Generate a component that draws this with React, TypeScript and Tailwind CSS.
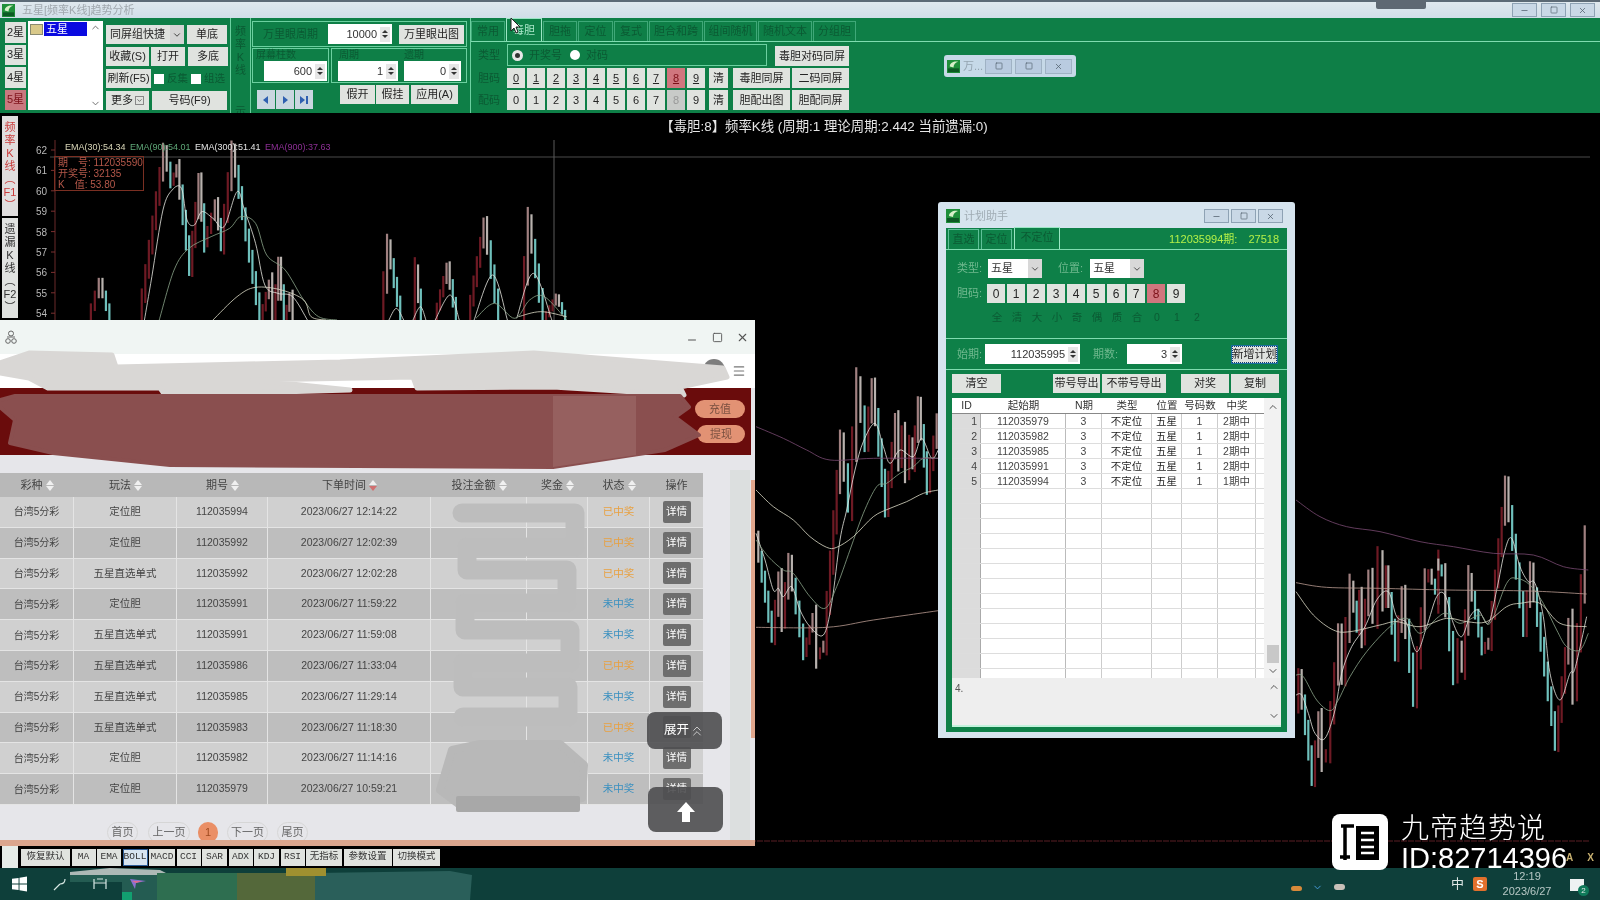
import { ChevronDown, ChevronUp, ChevronsUp, Menu, Minus, Square, X } from "lucide-react";
import { ReactNode } from "react";

type P = [number, number];

// points below were read off 3x crops, crop() puts them back on the page
const crop = (ox: number, oy: number, sx: number, sy: number, pts: P[]): P[] =>
  pts.map(([x, y]) => [ox + x / sx, oy + y / sy]);

const a = (pts: P[]) => crop(0, 130, 2.7, 3, pts);
const b = (pts: P[]) => crop(740, 370, 3, 3, pts);
const c = (pts: P[]) => crop(1280, 460, 3, 3, pts);

const zigzags: P[][] = [
  a([[240, 570], [272, 455], [300, 570]]),
  a([[378, 570], [445, 60], [465, 160], [480, 110], [515, 415], [540, 155], [555, 340], [585, 220], [600, 345], [630, 60], [705, 570], [730, 460], [740, 570], [755, 405], [770, 570], [785, 500], [795, 570]]),
  a([[1030, 570], [1050, 345], [1085, 570]]),
  a([[1115, 570], [1125, 425], [1140, 570]]),
  a([[1175, 570], [1210, 410], [1235, 570]]),
  a([[1265, 570], [1310, 280], [1350, 570]]),
  a([[1410, 570], [1430, 275], [1470, 570], [1505, 500], [1530, 570]]),
  b([[50, 500], [100, 800], [120, 630], [130, 750], [150, 575], [195, 850], [222, 740], [235, 860], [255, 820], [305, 215], [330, 400], [355, 45], [380, 220], [400, 50], [440, 415], [470, 155], [480, 270], [490, 190], [500, 305], [515, 220], [520, 280], [538, 105], [565, 350], [595, 150]]),
  c([[50, 735], [60, 650], [100, 955], [120, 780], [130, 900], [145, 875], [180, 525], [190, 640], [215, 380], [235, 500], [240, 415], [250, 530], [270, 355], [285, 460], [300, 305], [315, 420], [320, 340], [350, 580], [370, 405], [405, 710], [440, 360], [450, 335], [480, 425], [470, 305], [490, 340], [525, 645], [540, 560], [550, 620], [570, 355], [610, 570], [630, 545], [680, 75], [735, 505], [755, 330], [830, 850], [870, 500], [885, 680], [920, 240]]),
];

const lines: { color: string; pts: P[] }[] = [
  { color: "#e8e8e2", pts: a([[390, 570], [410, 440], [440, 240], [465, 180], [490, 175], [505, 270], [525, 285], [545, 245], [575, 265], [605, 290], [640, 185], [660, 240], [690, 340], [715, 465], [750, 490], [790, 500], [830, 570]]) },
  { color: "#e8e8e2", pts: a([[1050, 570], [1070, 535], [1090, 570]]) },
  { color: "#e8e8e2", pts: a([[1115, 570], [1135, 530], [1150, 570]]) },
  { color: "#e8e8e2", pts: a([[1175, 570], [1215, 495], [1240, 570]]) },
  { color: "#e8e8e2", pts: a([[1280, 570], [1330, 435], [1370, 570]]) },
  { color: "#e8e8e2", pts: a([[1395, 565], [1440, 430], [1490, 570]]) },
  { color: "#8ca58a", pts: a([[430, 570], [470, 420], [510, 355], [570, 320], [620, 295], [650, 260], [690, 280], [720, 375], [770, 420], [820, 510], [860, 560], [910, 570]]) },
  { color: "#8ca58a", pts: a([[1285, 565], [1335, 520], [1390, 565], [1430, 510], [1470, 500], [1530, 570]]) },
  { color: "#dcdac6", pts: a([[575, 570], [640, 500], [690, 472], [760, 480], [820, 510], [840, 560], [880, 570]]) },
  { color: "#dcdac6", pts: a([[1400, 560], [1460, 545], [1530, 560]]) },

  { color: "#e8e8e2", pts: b([[48, 490], [75, 570], [100, 660], [115, 655], [130, 680], [155, 650], [180, 720], [210, 770], [250, 795], [275, 700], [300, 510], [320, 420], [345, 300], [370, 215], [405, 160], [430, 230], [450, 280], [480, 240], [520, 260], [545, 205], [575, 265], [595, 240]]) },
  { color: "#8ca58a", pts: b([[48, 510], [85, 560], [130, 600], [160, 610], [210, 680], [255, 715], [290, 650], [330, 540], [370, 430], [410, 350], [440, 340], [480, 310], [520, 290], [550, 265], [595, 265]]) },
  { color: "#dcdac6", pts: b([[48, 360], [100, 410], [160, 450], [210, 500], [260, 532], [290, 532], [340, 500], [400, 440], [450, 415], [500, 395], [550, 370], [595, 360]]) },
  { color: "#7a4a72", pts: b([[48, 170], [130, 205], [200, 240], [270, 270], [400, 265], [595, 265]]) },
  { color: "#b99a90", pts: b([[48, 772], [260, 772], [400, 750], [595, 722]]) },

  { color: "#e8e8e2", pts: c([[48, 705], [65, 705], [85, 760], [105, 820], [135, 835], [165, 750], [185, 640], [215, 560], [255, 500], [290, 420], [325, 395], [350, 470], [380, 490], [410, 575], [440, 500], [470, 410], [495, 405], [520, 490], [545, 530], [570, 470], [595, 450], [625, 490], [650, 390], [675, 270], [695, 235], [720, 320], [745, 365], [765, 370], [790, 470], [810, 640], [840, 720], [870, 640], [885, 625], [920, 470]]) },
  { color: "#8ca58a", pts: c([[48, 645], [70, 650], [110, 720], [150, 752], [175, 720], [210, 650], [260, 575], [330, 500], [380, 475], [420, 520], [470, 475], [500, 460], [540, 490], [600, 465], [630, 490], [680, 370], [710, 355], [750, 375], [790, 430], [830, 510], [860, 560], [900, 570], [925, 520]]) },
  { color: "#dcdac6", pts: c([[48, 395], [100, 465], [160, 510], [210, 515], [300, 495], [350, 485], [420, 500], [500, 475], [560, 485], [620, 485], [680, 440], [720, 430], [780, 430], [840, 490], [920, 500]]) },
  { color: "#7a4a72", pts: c([[48, 120], [120, 170], [200, 200], [300, 215], [420, 245], [520, 260], [640, 280], [760, 285], [850, 320], [925, 330]]) },
  { color: "#b99a90", pts: c([[48, 368], [140, 382], [300, 385], [500, 390], [700, 392], [800, 395], [920, 402]]) },
];

function smooth(pts: P[]) {
  let d = `M${pts[0][0]} ${pts[0][1]}`;
  for (let i = 0; i < pts.length - 1; i++) {
    const p0 = pts[i - 1] ?? pts[i];
    const p1 = pts[i];
    const p2 = pts[i + 1];
    const p3 = pts[i + 2] ?? p2;
    d += ` C${p1[0] + (p2[0] - p0[0]) / 6} ${p1[1] + (p2[1] - p0[1]) / 6} ${p2[0] - (p3[0] - p1[0]) / 6} ${p2[1] - (p3[1] - p1[1]) / 6} ${p2[0]} ${p2[1]}`;
  }
  return d;
}

function candles(path: P[]) {
  const out: { x: number; y: number; h: number; fill: string }[] = [];
  for (let s = 0; s < path.length - 1; s++) {
    const [ax, ay] = path[s];
    const [bx, by] = path[s + 1];
    const n = Math.max(1, Math.round(Math.abs(bx - ax) / 3.6));
    const step = (by - ay) / n;
    const h = Math.max(Math.abs(step) * 1.6, 12);
    for (let i = 0; i < n; i++) {
      const mid = ay + step * (i + 0.5);
      const up = by < ay;
      const fill = up ? (i === n - 1 && n > 1 ? "#a08080" : "#6e1a24") : i === 0 ? "#b8b2ae" : "#6fc0bc";
      out.push({ x: ax + ((bx - ax) * (i + 0.5)) / n, y: mid - h / 2, h, fill });
    }
  }
  return out;
}

function Chart() {
  const ticks = [62, 61, 60, 59, 58, 57, 56, 55, 54];
  return (
    <svg viewBox="0 113 1600 733" className="absolute inset-0 w-full h-full">
      <line x1="50" y1="157" x2="1590" y2="157" stroke="#4a4a4a" />
      <line x1="554" y1="140" x2="554" y2="325" stroke="#5a5a5a" />
      <line x1="55" y1="140" x2="55" y2="325" stroke="#6b2a2a" />
      <line x1="750" y1="841" x2="1590" y2="841" stroke="#5a1f25" strokeDasharray="6 1" />
      {ticks.map((t, i) => (
        <g key={t}>
          <line x1="51" y1={150 + i * 20.4} x2="55" y2={150 + i * 20.4} stroke="#7a3030" />
          <text x="47" y={154 + i * 20.4} textAnchor="end" fontSize="10" fill="#b8b8b8">
            {t}
          </text>
        </g>
      ))}
      {zigzags.flatMap((z, i) =>
        candles(z).map((k, j) => (
          <rect key={`${i}-${j}`} x={k.x - 1.1} y={k.y} width="2.2" height={k.h} fill={k.fill} />
        ))
      )}
      {lines.map((l, i) => (
        <path key={i} d={smooth(l.pts)} fill="none" stroke={l.color} strokeWidth="0.8" />
      ))}
      <text x="65" y="150" fontSize="9" fill="#d9d6b8">EMA(30):54.34</text>
      <text x="130" y="150" fontSize="9" fill="#5fa878">EMA(90):54.01</text>
      <text x="195" y="150" fontSize="9" fill="#e4e4e4">EMA(300):51.41</text>
      <text x="265" y="150" fontSize="9" fill="#8c2f94">EMA(900):37.63</text>
    </svg>
  );
}

function Btn({ className = "", children }: { className?: string; children: ReactNode }) {
  return (
    <div className={`flex items-center justify-center bg-[#e0e3df] text-[#252525] text-[11px] leading-none whitespace-nowrap shrink-0 ${className}`}>
      {children}
    </div>
  );
}

function Spin() {
  return (
    <div className="w-[10px] h-[15px] flex flex-col items-center justify-center gap-[2px] bg-[#e6e6e6] shrink-0">
      <span className="w-0 h-0 border-x-[3px] border-x-transparent border-b-[3px] border-b-[#333]" />
      <span className="w-0 h-0 border-x-[3px] border-x-transparent border-t-[3px] border-t-[#333]" />
    </div>
  );
}

function NumInput({ value, className = "" }: { value: string; className?: string }) {
  return (
    <div className={`flex items-center justify-end gap-[3px] pr-[2px] bg-white text-[11px] text-[#333] shrink-0 ${className}`}>
      {value}
      <Spin />
    </div>
  );
}

function VText({ chars, className = "" }: { chars: string[]; className?: string }) {
  return (
    <div className={`flex flex-col items-center justify-center leading-[13px] text-[11px] ${className}`}>
      {chars.map((ch, i) => (
        <span key={i}>{ch}</span>
      ))}
    </div>
  );
}

function AppIcon({ className = "" }: { className?: string }) {
  return (
    <svg viewBox="0 0 14 14" className={className}>
      <rect width="14" height="14" fill="#1f8f3a" />
      <path d="M3 7 C3 3 8 1 12 2 C9 3 7 5 7 8 Z" fill="#d8f0c8" />
      <rect x="1" y="9" width="12" height="4" fill="#0c5a24" />
    </svg>
  );
}

function WinBtn({ children }: { children: ReactNode }) {
  return (
    <div className="w-[25px] h-[14px] flex items-center justify-center border border-[#8ea2b4] bg-[#c9d8e6] text-[#52606e]">
      {children}
    </div>
  );
}

function Title() {
  return (
    <div className="relative h-[18px] shrink-0 flex items-center border-t-2 border-[#5c6a76] bg-gradient-to-b from-[#dfe8ee] to-[#d0dee8]">
      <AppIcon className="ml-[2px] w-[13px] h-[13px]" />
      <span className="ml-[7px] text-[11px] text-[#a0a8ae]">五星[频率K线]趋势分析</span>
      <div className="absolute left-[1376px] top-[-2px] w-[50px] h-[9px] bg-[#5e6873] rounded-b-[2px]" />
      <div className="ml-auto mr-[5px] flex gap-[4px]">
        <WinBtn><Minus size={9} /></WinBtn>
        <WinBtn><Square size={8} /></WinBtn>
        <WinBtn><X size={9} /></WinBtn>
      </div>
    </div>
  );
}

function Check({ label }: { label: string }) {
  return (
    <div className="flex items-center gap-[3px] text-[10.5px] text-[#0b5a33] ml-[3px] whitespace-nowrap shrink-0">
      <span className="w-[10px] h-[10px] bg-white" />
      {label}
    </div>
  );
}

function Arrow({ d }: { d: string }) {
  return (
    <Btn className="w-[18px] h-[19px] bg-[#c9d6e0]!">
      <svg viewBox="0 0 10 10" className="w-[10px] h-[10px]">
        <path d={d} fill="#2f5fb0" />
      </svg>
    </Btn>
  );
}

const tabs: [string, string][] = [
  ["常用", "w-[34px]"],
  ["毒胆", "w-[36px]"],
  ["胆拖", "w-[34px]"],
  ["定位", "w-[35px]"],
  ["复式", "w-[34px]"],
  ["胆合和跨", "w-[54px]"],
  ["组间随机", "w-[53px]"],
  ["随机文本", "w-[54px]"],
  ["分组胆", "w-[43px]"],
];
const digits = ["0", "1", "2", "3", "4", "5", "6", "7", "8", "9"];

function Toolbar() {
  return (
    <div className="h-[95px] shrink-0 flex bg-[#0e7f47]">
      <div className="w-[21px] ml-[5px] mt-[4px] flex flex-col gap-[2px] shrink-0">
        {["2星", "3星", "4星"].map((s) => (
          <Btn key={s} className="h-[20.5px]">{s}</Btn>
        ))}
        <Btn className="h-[20.5px] bg-[#c9797f]! text-[#7c1018]!">5星</Btn>
      </div>
      <div className="w-[75px] h-[89px] ml-[2px] mt-[3px] bg-white flex shrink-0">
        <div className="w-[59px] flex items-start pl-[2px] pt-[1px]">
          <span className="w-[13px] h-[11px] mt-[2px] mr-[1px] bg-[#d9c98a] border border-[#8a8a70]" />
          <span className="w-[43px] h-[14px] pl-[2px] bg-[#0a0ae0] text-white text-[11px] leading-[14px]">五星</span>
        </div>
        <div className="flex-1 flex flex-col items-center justify-between py-[1px] text-[#666]">
          <ChevronUp size={11} />
          <ChevronDown size={11} />
        </div>
      </div>

      <div className="w-[121px] ml-[3px] mt-[7px] flex flex-col gap-[3px] shrink-0">
        <div className="flex h-[19px] gap-[3px]">
          <Btn className="w-[78px] justify-start pl-[4px] relative overflow-hidden">
            同屏组快捷
            <span className="absolute right-0 top-0 h-full w-[14px] flex items-center justify-center bg-[#d4d4d4]"><ChevronDown size={10} /></span>
          </Btn>
          <Btn className="w-[40px]">单底</Btn>
        </div>
        <div className="flex h-[19px]">
          <Btn className="w-[43px]">收藏(S)</Btn>
          <Btn className="w-[34px] ml-[2px]">打开</Btn>
          <Btn className="w-[40px] ml-[3px]">多底</Btn>
        </div>
        <div className="flex h-[19px] items-center">
          <Btn className="w-[45px] h-full">刷新(F5)</Btn>
          <Check label="反集" />
          <Check label="组选" />
        </div>
        <div className="flex h-[19px]">
          <Btn className="w-[43px] gap-[2px]">更多<ChevronDown size={9} className="border border-[#888]" /></Btn>
          <Btn className="w-[75px] ml-[3px]">号码(F9)</Btn>
        </div>
      </div>

      <div className="w-[1px] ml-[3px] bg-[#6cd0a0] shrink-0" />
      <div className="w-[19px] flex flex-col items-center text-[#0b5a33] shrink-0">
        <VText chars={["频", "率", "K", "线"]} className="mt-[7px]" />
        <VText chars={["示"]} className="mt-[28px]" />
      </div>
      <div className="w-[1px] bg-[#6cd0a0] shrink-0" />

      <div className="w-[219px] flex flex-col shrink-0 pl-[1px]">
        <div className="w-[215px] h-[26px] mt-[3px] flex items-center border border-[#6cd0a0]">
          <span className="w-[75px] text-center text-[11px] text-[#0b5a33]">万里眼周期</span>
          <NumInput value="10000" className="w-[64px] h-[20px]" />
          <Btn className="w-[65px] h-[19px] ml-[7px]">万里眼出图</Btn>
        </div>
        <div className="flex h-[35px] mt-[1px]">
          <div className="w-[77px] border border-[#6cd0a0] text-[10px] leading-[12px] text-[#0b5a33] pl-[3px]">
            屏幕柱数
            <NumInput value="600" className="w-[63px] h-[20px] ml-[8px]" />
          </div>
          <div className="w-[136px] ml-[2px] border border-[#6cd0a0] flex text-[10px] leading-[12px] text-[#0b5a33]">
            <div className="w-[66px] pl-[6px]">
              <div className="pl-[1px]">周期</div>
              <NumInput value="1" className="w-[60px] h-[20px]" />
            </div>
            <div className="pl-[6px]">
              <div>遗期</div>
              <NumInput value="0" className="w-[57px] h-[20px]" />
            </div>
          </div>
        </div>
        <div className="flex mt-[2px] pl-[5px] items-start">
          <div className="flex gap-[1px] mt-[5px]">
            <Arrow d="M7 1 L2 5 L7 9 Z" />
            <Arrow d="M3 1 L8 5 L3 9 Z" />
            <Arrow d="M1 1 L6 5 L1 9 Z M7 1 H9 V9 H7 Z" />
          </div>
          <Btn className="w-[35px] h-[19px] ml-[27px]">假开</Btn>
          <Btn className="w-[33px] h-[19px] ml-[1px]">假挂</Btn>
          <Btn className="w-[47px] h-[19px] ml-[2px]">应用(A)</Btn>
        </div>
      </div>

      <div className="w-[1px] bg-[#6cd0a0] shrink-0" />

      <div className="flex-1 flex flex-col">
        <div className="h-[24px] flex items-end gap-[1px] border-b border-[#7fdcb0]">
          {tabs.map(([t, w], i) => (
            <div
              key={t}
              className={`${w} flex items-center justify-center text-[11px] border-t border-x ${i === 1 ? "h-[23px] border-[#9ce6c4] text-[#a8e6c8]" : "h-[20px] border-[#3fa878] text-[#0b5a33]"}`}
            >
              {t}
            </div>
          ))}
        </div>
        <div className="flex h-[22px] mt-[2px]">
          <span className="w-[36px] flex items-center justify-center text-[11px] text-[#0b5a33]">类型</span>
          <div className="w-[260px] flex items-center border border-[#6cd0a0] pl-[4px] text-[11px] text-[#0b5a33]">
            <span className="w-[11px] h-[11px] rounded-full bg-[#333] border-[3px] border-[#e8e8e8]" />
            <span className="ml-[6px]">开奖号</span>
            <span className="w-[10px] h-[10px] ml-[8px] rounded-full bg-white" />
            <span className="ml-[6px]">对码</span>
          </div>
          <Btn className="w-[74px] h-[20px] mt-[2px] ml-[8px]">毒胆对码同屏</Btn>
        </div>
        <div className="flex h-[20px] mt-[2px]">
          <span className="w-[36px] flex items-center justify-center text-[11px] text-[#0b5a33]">胆码</span>
          <div className="flex gap-[2px]">
            {digits.map((d) => (
              <Btn key={d} className={`w-[18px] underline ${d === "8" ? "bg-[#d0767e]! text-[#7c1018]!" : ""}`}>{d}</Btn>
            ))}
          </div>
          <Btn className="w-[19px] ml-[4px]">清</Btn>
          <Btn className="w-[57px] ml-[5px]">毒胆同屏</Btn>
          <Btn className="w-[57px] ml-[2px]">二码同屏</Btn>
        </div>
        <div className="flex h-[20px] mt-[2px]">
          <span className="w-[36px] flex items-center justify-center text-[11px] text-[#0b5a33]">配码</span>
          <div className="flex gap-[2px]">
            {digits.map((d) => (
              <Btn key={d} className={`w-[18px] ${d === "8" ? "bg-[#c8cac8]! text-[#999]!" : ""}`}>{d}</Btn>
            ))}
          </div>
          <Btn className="w-[19px] ml-[4px]">清</Btn>
          <Btn className="w-[57px] ml-[5px]">胆配出图</Btn>
          <Btn className="w-[57px] ml-[2px]">胆配同屏</Btn>
        </div>
      </div>
    </div>
  );
}

function Tooltip() {
  return (
    <div className="absolute left-[54px] top-[43px] w-[90px] h-[35px] border border-[#7a2f22] pl-[3px] text-[10px] leading-[11px] text-[#b5584a]">
      <div>期　号: 112035590</div>
      <div>开奖号: 32135</div>
      <div>K　值: 53.80</div>
    </div>
  );
}

function MiniWindow() {
  return (
    <div className="absolute left-[944px] top-[55px] w-[132px] h-[22px] rounded-[3px] flex items-center pl-[3px] bg-[#c6d9e8]">
      <AppIcon className="w-[13px] h-[13px]" />
      <span className="ml-[3px] w-[22px] text-[11px] text-[#94a4b0]">万...</span>
      <div className="flex gap-[3px]">
        <div className="w-[27px] h-[15px] flex items-center justify-center border border-[#9fb2c4] bg-[#b9cbe0]"><Square size={8} className="text-[#51606e]" /></div>
        <div className="w-[27px] h-[15px] flex items-center justify-center border border-[#9fb2c4] bg-[#b9cbe0]"><Square size={8} className="text-[#51606e]" /></div>
        <div className="w-[27px] h-[15px] flex items-center justify-center border border-[#9fb2c4] bg-[#b9cbe0]"><X size={9} className="text-[#51606e]" /></div>
      </div>
    </div>
  );
}

type Plan = [string, string];
const plans: Plan[] = [
  ["112035979", "2期中"],
  ["112035982", "2期中"],
  ["112035985", "2期中"],
  ["112035991", "2期中"],
  ["112035994", "1期中"],
];
const planCols = "grid grid-cols-[29px_85px_36px_50px_30px_36px_38px_8px]";

function PlanTable() {
  const rows = Array.from({ length: 18 }, (_, i) => i);
  return (
    <div className="mx-[6px] mt-[5px] h-[280px] flex bg-white overflow-hidden">
      <div className="w-[312px] flex flex-col overflow-hidden">
        <div className={`${planCols} h-[16px] border-b border-[#888] shrink-0 text-[10.5px] leading-[15px] text-center text-[#333]`}>
          {["ID", "起始期", "N期", "类型", "位置", "号码数", "中奖", ""].map((h) => (
            <div key={h}>{h}</div>
          ))}
        </div>
        {rows.map((i) => {
          const p = plans[i];
          return (
            <div key={i} className={`${planCols} h-[15px] shrink-0 border-b border-[#ddd] text-[10.5px] leading-[14px] text-center text-[#444]`}>
              <div className="bg-[#dcdcdc] border-r border-[#aaa] text-right pr-[3px]">{p ? i + 1 : ""}</div>
              <div className="border-r border-[#bbb]">{p?.[0]}</div>
              <div className="border-r border-[#ccc]">{p ? 3 : ""}</div>
              <div className="border-r border-[#ccc] text-[#222]">{p ? "不定位" : ""}</div>
              <div className="border-r border-[#ccc] text-[#222]">{p ? "五星" : ""}</div>
              <div className="border-r border-[#ccc]">{p ? 1 : ""}</div>
              <div className="border-r border-[#ccc]">{p?.[1]}</div>
              <div />
            </div>
          );
        })}
      </div>
      <div className="flex-1 pl-[1px] bg-[#f2f2f2] flex flex-col items-center text-[#555]">
        <ChevronUp size={12} className="mt-[3px]" />
        <div className="mt-auto w-[12px] h-[18px] bg-[#c8c8c8]" />
        <ChevronDown size={12} className="mt-[2px] mb-[1px]" />
      </div>
    </div>
  );
}

function PlanWindow() {
  const pick = ["全", "清", "大", "小", "奇", "偶", "质", "合", "0", "1", "2"];
  return (
    <div className="absolute left-[938px] top-[89px] w-[357px] h-[536px] rounded-t-[3px] flex flex-col px-[8px] pb-[6px] bg-[#d6e4ee]">
      <div className="h-[26px] shrink-0 flex items-center text-[#a0acb4] pt-[2px]">
        <AppIcon className="w-[14px] h-[14px]" />
        <span className="ml-[4px] text-[11px]">计划助手</span>
        <div className="ml-auto flex gap-[2px] mr-[4px]">
          <WinBtn><Minus size={9} /></WinBtn>
          <WinBtn><Square size={8} /></WinBtn>
          <WinBtn><X size={9} /></WinBtn>
        </div>
      </div>
      <div className="flex-1 flex flex-col bg-[#0e8048] text-[11px] text-[#0b5a33]">
        <div className="h-[22px] shrink-0 flex items-end border-b border-[#7fdcb0] pl-[2px] gap-[2px]">
          <div className="w-[31px] h-[20px] flex items-center justify-center border-t border-x border-[#5fc098]">直选</div>
          <div className="w-[31px] h-[20px] flex items-center justify-center border-t border-x border-[#5fc098]">定位</div>
          <div className="w-[46px] h-[22px] flex items-center justify-center border-t border-x border-[#9ce6c4] pb-[3px]">不定位</div>
          <div className="ml-auto mr-[8px] h-[20px] flex items-center gap-[11px] text-[#b4f048]">
            <span>112035994期:</span>
            <span>27518</span>
          </div>
        </div>
        <div className="h-[89px] shrink-0 border-b border-[#7fdcb0] text-[#6fb88e] relative">
          <div className="flex items-center h-[19px] mt-[9px] pl-[11px]">
            <span>类型:</span>
            <div className="w-[54px] h-[19px] ml-[6px] pl-[3px] flex items-center bg-white text-[#333]">五星<span className="ml-auto w-[14px] h-full flex items-center justify-center bg-[#d8d8d8]"><ChevronDown size={10} /></span></div>
            <span className="ml-[16px]">位置:</span>
            <div className="w-[54px] h-[19px] ml-[7px] pl-[3px] flex items-center bg-white text-[#333]">五星<span className="ml-auto w-[14px] h-full flex items-center justify-center bg-[#d8d8d8]"><ChevronDown size={10} /></span></div>
          </div>
          <div className="flex items-center h-[19px] mt-[6px] pl-[11px]">
            <span>胆码:</span>
            <div className="flex gap-[2px] ml-[5px]">
              {digits.map((d) => (
                <Btn key={d} className={`w-[18px] h-[19px] text-[12px]! ${d === "8" ? "bg-[#d0767e]! text-[#7c1018]!" : ""}`}>{d}</Btn>
              ))}
            </div>
          </div>
          <div className="flex pl-[41px] mt-[7px] text-[#0b5a33] text-[10.5px]">
            {pick.map((t) => (
              <span key={t} className="w-[20px] text-center">{t}</span>
            ))}
          </div>
        </div>
        <div className="h-[31px] shrink-0 flex items-center pl-[11px] border-b border-[#7fdcb0] text-[#6fb88e]">
          <span className="w-[28px]">始期:</span>
          <NumInput value="112035995" className="w-[95px] h-[20px]" />
          <span className="ml-[13px]">期数:</span>
          <NumInput value="3" className="w-[55px] h-[20px] ml-[9px]" />
          <Btn className="w-[45px] h-[17px] ml-[50px] border border-dotted border-[#123a6a] outline outline-1 outline-[#1a6fa0]">新增计划</Btn>
        </div>
        <div className="flex h-[19px] mt-[4px] shrink-0 pl-[6px]">
          <Btn className="w-[49px]">清空</Btn>
          <Btn className="w-[47px] ml-[52px]">带号导出</Btn>
          <Btn className="w-[64px] ml-[2px]">不带号导出</Btn>
          <Btn className="w-[48px] ml-[15px]">对奖</Btn>
          <Btn className="w-[48px] ml-[2px]">复制</Btn>
        </div>
        <PlanTable />
        <div className="mx-[6px] h-[49px] flex bg-[#eeeeee] border-b-2 border-[#c2f2dc] text-[#555] text-[10px]">
          <span className="pl-[3px] pt-[3px]">4.</span>
          <div className="ml-auto w-[15px] flex flex-col items-center justify-between py-[3px]">
            <ChevronUp size={12} />
            <ChevronDown size={12} />
          </div>
        </div>
      </div>
    </div>
  );
}

type Bet = [string, string, string, boolean];
const bets: Bet[] = [
  ["定位胆", "112035994", "12:14:22", true],
  ["定位胆", "112035992", "12:02:39", true],
  ["五星直选单式", "112035992", "12:02:28", true],
  ["定位胆", "112035991", "11:59:22", false],
  ["五星直选单式", "112035991", "11:59:08", false],
  ["五星直选单式", "112035986", "11:33:04", true],
  ["五星直选单式", "112035985", "11:29:14", false],
  ["五星直选单式", "112035983", "11:18:30", true],
  ["定位胆", "112035982", "11:14:16", false],
  ["定位胆", "112035979", "10:59:21", false],
];
const betCols = "grid grid-cols-[74px_103px_91px_163px_96px_61px_62px_53px]";

function SortMark({ on }: { on?: boolean }) {
  return (
    <span className="inline-flex flex-col gap-[1px] ml-[3px]">
      <span className="w-0 h-0 border-x-[4px] border-x-transparent border-b-[5px] border-b-[#f0f0f0]" />
      <span className={`w-0 h-0 border-x-[4px] border-x-transparent border-t-[5px] ${on ? "border-t-[#d07070]" : "border-t-[#f0f0f0]"}`} />
    </span>
  );
}

function BetTable() {
  const heads: [string, boolean?][] = [["彩种"], ["玩法"], ["期号"], ["下单时间", true], ["投注金额"], ["奖金"], ["状态"]];
  return (
    <div className="w-[703px] mt-[18px]">
      <div className={`${betCols} h-[24px] bg-[#b8b8b8] text-[11px] text-[#444]`}>
        {heads.map(([h, on]) => (
          <div key={h} className="flex items-center justify-center">
            {h}
            <SortMark on={on} />
          </div>
        ))}
        <div className="flex items-center justify-center">操作</div>
      </div>
      {bets.map(([kind, no, time, won], i) => (
        <div
          key={i}
          className={`${betCols} h-[30.8px] items-stretch border-b border-[#e4e4e4] text-[10.5px] text-[#444] ${i % 2 ? "bg-[#bebebe]" : "bg-[#d0d0d0]"}`}
        >
          <div className="flex items-center justify-center border-r border-[#e4e4e4] text-[10px]">台湾5分彩</div>
          <div className="flex items-center justify-center border-r border-[#e4e4e4]">{kind}</div>
          <div className="flex items-center justify-center border-r border-[#e4e4e4]">{no}</div>
          <div className="flex items-center justify-center border-r border-[#e4e4e4]">2023/06/27 {time}</div>
          <div className="border-r border-[#e4e4e4]" />
          <div className="border-r border-[#e4e4e4]" />
          <div className={`flex items-center justify-center border-r border-[#e4e4e4] ${won ? "text-[#e8a040]" : "text-[#3a90c0]"}`}>
            {won ? "已中奖" : "未中奖"}
          </div>
          <div className="flex items-center justify-center">
            <span className="w-[28px] h-[22px] flex items-center justify-center rounded-[2px] bg-[#6e6e6e] text-white">详情</span>
          </div>
        </div>
      ))}
    </div>
  );
}

function Pager() {
  const pill = "h-[21px] flex items-center justify-center rounded-full border border-[#d6d6d6] text-[11px] text-[#666]";
  return (
    <div className="flex mt-[17px] pl-[107px] gap-[9px]">
      <div className={`${pill} w-[31px]`}>首页</div>
      <div className={`${pill} w-[42px] ml-[1px]`}>上一页</div>
      <div className="w-[20px] h-[21px] flex items-center justify-center rounded-full bg-[#ea8f66] text-[11px] text-[#a04a20] ml-[-1px]">1</div>
      <div className={`${pill} w-[41px]`}>下一页</div>
      <div className={`${pill} w-[31px]`}>尾页</div>
    </div>
  );
}

function BrowserWindow() {
  return (
    <div className="absolute left-0 top-[207px] w-[755px] h-[526px] flex flex-col overflow-hidden bg-[#e6e6ea]">
      <div className="h-[34px] shrink-0 flex items-center bg-[#f0f5f3] text-[#555]">
        <svg viewBox="0 0 12 14" className="ml-[5px] w-[12px] h-[14px]" fill="none" stroke="#666">
          <circle cx="6" cy="3.5" r="2.5" />
          <path d="M2 7 H10" />
          <circle cx="3" cy="11" r="2.3" />
          <circle cx="9" cy="11" r="2.3" />
        </svg>
        <Minus size={12} className="ml-auto mt-[6px]" />
        <Square size={11} className="ml-[14px]" />
        <X size={13} className="ml-[13px] mr-[6px]" />
      </div>
      <div className="h-[34px] shrink-0 flex items-center justify-end bg-white pr-[9px] text-[#777]">
        <Menu size={14} />
      </div>
      <div className="h-[67px] w-[751px] shrink-0 flex flex-col items-end justify-center gap-[7px] pr-[6px] bg-[#6a0c0c]">
        <span className="w-[50px] h-[18px] flex items-center justify-center rounded-full bg-[#e29274] text-[11px] text-[#7a5040]">充值</span>
        <span className="w-[48px] h-[18px] flex items-center justify-center rounded-full bg-[#e29274] text-[11px] text-[#7a5040]">提现</span>
      </div>
      <BetTable />
      <Pager />
      <svg viewBox="0 0 755 526" className="absolute inset-0 w-full h-full pointer-events-none">
        <circle cx="714" cy="50" r="11" fill="#7d7d7d" />
        <path d="M0 53 L0 43 L29 33 L112 35 L116 47 L340 42 L534 33 L660 43 L723 48 L727 57 L680 67 L684 75 L553 67 L417 68 L413 57 L252 60 L350 70 L165 75 L160 68 L48 68 L29 58 Z" fill="#d9d7d5" stroke="#d9d7d5" strokeWidth="5" strokeLinejoin="round" />
        <path d="M15 76 L680 76 L689 87 L675 97 L699 115 L665 130 L553 147 L170 145 L53 133 L10 123 L15 100 L0 87 L0 80 Z" fill="#8a4f4f" stroke="#8a4f4f" strokeWidth="4" strokeLinejoin="round" />
        <path d="M553 76 L636 76 L636 135 L553 147 Z" fill="#96605f" />
        <path
          d="M462 193 H575 V227 H467 V250 H567 V283 H465 V310 H570 V343 H463 V367 H568 V397 H463"
          fill="none"
          stroke="#bdbdbd"
          strokeWidth="19"
          strokeLinejoin="round"
          strokeLinecap="round"
        />
        <path d="M452 430 L480 424 L560 424 L584 445 L582 478 L540 485 L460 485 L440 470 Z" fill="#b8b8b8" stroke="#b8b8b8" strokeWidth="8" strokeLinejoin="round" />
        <path d="M458 478 H578 V490 H458 Z" fill="#a8a8a8" stroke="#a8a8a8" strokeWidth="4" strokeLinejoin="round" />
        {/* scroll bar and its track on the right */}
        <rect x="730" y="150" width="20" height="376" fill="#dcdfdf" />
        <rect x="751" y="160" width="4" height="258" fill="#e0a68c" />
        <rect x="0" y="520" width="755" height="6" fill="#dba68e" />
      </svg>
      <div className="absolute left-[647px] top-[392px] w-[75px] h-[37px] rounded-[8px] flex items-center justify-center bg-[#4e4e50]/90 text-[12.5px] text-white">
        展开
        <ChevronsUp size={16} strokeWidth={1} />
      </div>
      <div className="absolute left-[648px] top-[467px] w-[75px] h-[45px] rounded-[8px] flex items-center justify-center bg-[#4e4e50]/90">
        <svg viewBox="0 0 18 22" className="w-[18px] h-[22px] mt-[4px]">
          <path d="M9 1 L18 11 H13 V21 H5 V11 H0 Z" fill="#fff" />
        </svg>
      </div>
    </div>
  );
}

function IndicatorBar() {
  const items: [string, string][] = [
    ["恢复默认", "w-[49px]"],
    ["MA", "w-[24px]"],
    ["EMA", "w-[24px]"],
    ["BOLL", "w-[25px] border border-[#2f5f9a] bg-[#d8e4f0]!"],
    ["MACD", "w-[26px]"],
    ["CCI", "w-[24px]"],
    ["SAR", "w-[25px]"],
    ["ADX", "w-[24px]"],
    ["KDJ", "w-[25px]"],
    ["RSI", "w-[24px]"],
    ["无指标", "w-[36px]"],
    ["参数设置", "w-[48px]"],
    ["切换模式", "w-[47px]"],
  ];
  return (
    <div className="h-[22px] shrink-0 flex items-center bg-black pl-[2px]">
      <div className="w-[16px] h-[22px] bg-[#e6ece8]" />
      <div className="flex gap-[1.5px] ml-[3px] font-['Liberation_Mono','Noto_Sans_CJK_SC',monospace]">
        {items.map(([t, w]) => (
          <Btn key={t} className={`${w} h-[17px] text-[9.5px]! bg-[#d4d4d4] text-[#333]!`}>{t}</Btn>
        ))}
      </div>
      <span className="ml-auto text-[10px] font-bold text-[#c8b070]">A</span>
      <span className="ml-[14px] mr-[6px] text-[10px] font-bold text-[#c8b070]">X</span>
    </div>
  );
}

function Taskbar() {
  return (
    <div className="relative h-[32px] shrink-0 flex items-center bg-[#0e3f3a] text-white">
      <svg viewBox="0 0 700 32" className="absolute left-0 top-0 w-[700px] h-[32px]">
        <path d="M70 4 L110 0 L160 2 L170 7 L70 7 Z" fill="#aeb9b6" />
        <path d="M70 7 L157 7 L157 32 L122 32 L122 14 L70 14 Z" fill="#245c52" />
        <rect x="157" y="5" width="80" height="27" fill="#2e6e50" />
        <rect x="237" y="5" width="78" height="27" fill="#54683a" />
        <path d="M315 5 L450 3 L472 7 L470 32 L315 32 Z" fill="#2a5f5a" />
        <rect x="286" y="0" width="40" height="8" fill="#a09030" />
        <rect x="122" y="24" width="10" height="8" fill="#12a070" />
      </svg>
      <svg viewBox="0 0 16 16" className="relative ml-[12px] w-[15px] h-[16px]" fill="#fff">
        <path d="M0 2.5 L7 1.5 V7.5 H0 Z M8 1.3 L16 0 V7.5 H8 Z M0 8.5 H7 V14.5 L0 13.5 Z M8 8.5 H16 V16 L8 14.7 Z" />
      </svg>
      <svg viewBox="0 0 14 14" className="relative ml-[26px] w-[14px] h-[14px]" fill="none" stroke="#d8e8e4" strokeWidth="1.2">
        <path d="M1 13 L7 7 M7 7 C10 7 12 5 12 2" />
      </svg>
      <svg viewBox="0 0 14 12" className="relative ml-[26px] w-[14px] h-[12px]" fill="none" stroke="#d8e8e4" strokeWidth="1.2">
        <path d="M1 1 V11 M13 1 V11 M1 5 H13 M4 1 H10" />
      </svg>
      <svg viewBox="0 0 16 12" className="relative ml-[23px] w-[16px] h-[12px]">
        <path d="M0 1 L16 3 L6 5 L5 11 Z" fill="#8a70d0" />
        <path d="M2 3 L12 3 L6 5 Z" fill="#e06a90" />
      </svg>
      <div className="relative ml-auto flex items-center text-[#dfe8e6]">
        <span className="w-[11px] h-[5px] rounded-full bg-[#d88a3a] mr-[10px] mt-[8px]" />
        <ChevronDown size={11} className="text-[#4aa0e0] mr-[11px] mt-[6px]" />
        <span className="w-[11px] h-[6px] bg-[#c8c0b8] rounded-full mr-[106px] mt-[6px]" />
        <span className="text-[13px]">中</span>
        <span className="ml-[9px] w-[14px] h-[14px] flex items-center justify-center rounded-[2px] bg-[#e2702c] text-[11px] font-bold text-white">S</span>
        <div className="ml-[10px] w-[60px] flex flex-col items-center text-[11px] leading-[15px] opacity-80">
          <span>12:19</span>
          <span>2023/6/27</span>
        </div>
        <div className="relative ml-[13px] mr-[16px] w-[14px] h-[12px] bg-[#eef2f2] mt-[2px]">
          <span className="absolute -right-[5px] -bottom-[5px] w-[11px] h-[11px] flex items-center justify-center rounded-full bg-[#0f7a5a] text-[8px]">2</span>
        </div>
      </div>
    </div>
  );
}

function Watermark() {
  return (
    <div className="absolute left-[1332px] top-[814px] flex items-start">
      <svg viewBox="0 0 56 56" className="w-[56px] h-[56px]">
        <rect width="56" height="56" rx="8" fill="#fff" />
        <path d="M9 12 H22 M13 12 V46 M8 43 H18" stroke="#000" strokeWidth="3.5" fill="none" />
        <path d="M24 12 H47 V46 H24 Z" fill="#000" />
        <path d="M29 19 H42 M29 26 H42 M29 33 H42 M29 39 H42" stroke="#fff" strokeWidth="2.5" />
      </svg>
      <div className="ml-[13px] text-white font-light">
        <div className="text-[28px] leading-[28px] tracking-[1px] mt-[1px]">九帝趋势说</div>
        <div className="text-[29px] leading-[30px] whitespace-nowrap">ID:82714396</div>
      </div>
    </div>
  );
}

export default function App() {
  return (
    <div className="relative w-[1600px] h-[900px] overflow-hidden flex flex-col bg-black font-['Liberation_Sans','Noto_Sans_CJK_SC',sans-serif] blur-[0.4px]">
      <Title />
      <Toolbar />
      <div className="relative flex-1 bg-black overflow-hidden">
        <Chart />
        <div className="absolute left-[2px] top-[3px] w-[16px] h-[100px] flex items-center justify-center bg-[#e0dede]">
          <VText chars={["频", "率", "K", "线", "︵", "F1", "︶"]} className="text-[#c93a3a]" />
        </div>
        <div className="absolute left-[2px] top-[105px] w-[16px] h-[100px] flex items-center justify-center bg-[#e0e2e0]">
          <VText chars={["遗", "漏", "K", "线", "︵", "F2", "︶"]} className="text-[#333]" />
        </div>
        <Tooltip />
        <div className="absolute left-0 right-0 top-0 text-center text-[13.4px] leading-[28px] text-[#e6e6e6]">
          <span className="ml-[48px]">【毒胆:8】频率K线 (周期:1 理论周期:2.442 当前遗漏:0)</span>
        </div>
        <PlanWindow />
        <BrowserWindow />
      </div>
      <IndicatorBar />
      <Taskbar />
      <MiniWindow />
      <svg viewBox="0 0 12 18" className="absolute left-[510px] top-[17px] w-[12px] h-[18px]">
        <path d="M1 1 L1 14 L4 11 L6 16 L8 15 L6 10 L10 10 Z" fill="#fff" stroke="#222" />
      </svg>
      <Watermark />
    </div>
  );
}
